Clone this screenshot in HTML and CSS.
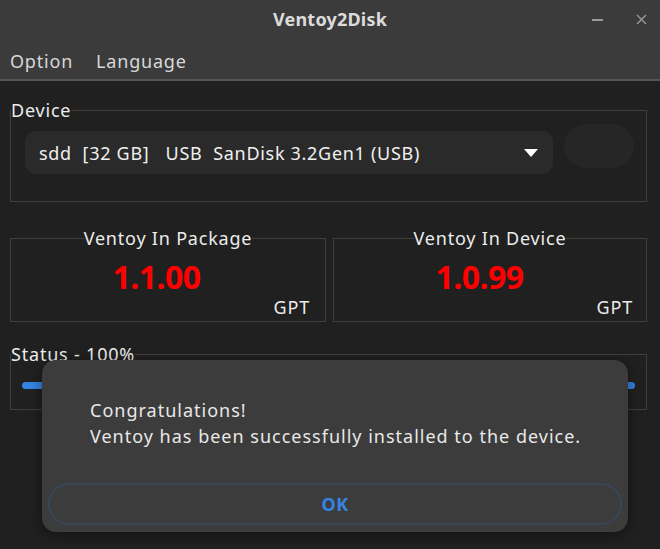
FILE: index.html
```html
<!DOCTYPE html>
<html lang="en">
<head>
    <meta charset="UTF-8">
    <meta name="viewport" content="width=device-width, initial-scale=1.0">
    <title>Ventoy2Disk</title>
    <link rel="stylesheet" href="styles.css">
</head>
<body>
    <!-- Window title bar -->
    <div class="titlebar">
        <span class="title">Ventoy2Disk</span>
        <div class="win-controls">
            <span class="win-min"></span>
            <svg class="win-close" width="11" height="11" viewBox="0 0 11 11">
                <path d="M1 1 L10 10 M10 1 L1 10" stroke="#9a9a9a" stroke-width="1.4" fill="none"/>
            </svg>
        </div>
    </div>

    <!-- Menu bar -->
    <div class="menubar">
        <span class="menu-item">Option</span>
        <span class="menu-item">Language</span>
    </div>

    <div class="main">
        <!-- Device selection -->
        <fieldset class="group device-group">
            <legend>Device</legend>
            <div class="device-row">
                <div class="combo">
                    <span class="combo-text">sdd&nbsp;&nbsp;[32 GB]&nbsp;&nbsp;&nbsp;USB&nbsp;&nbsp;SanDisk 3.2Gen1 (USB)</span>
                    <svg class="combo-arrow" width="14" height="8" viewBox="0 0 14 8">
                        <path d="M0 0 H14 L7 8 Z" fill="#ffffff"/>
                    </svg>
                </div>
                <div class="refresh-btn"></div>
            </div>
        </fieldset>

        <!-- Versions -->
        <div class="version-row">
            <fieldset class="group version-group">
                <legend>Ventoy In Package</legend>
                <div class="version">1.1.00</div>
                <div class="part-style">GPT</div>
            </fieldset>
            <fieldset class="group version-group device-version">
                <legend>Ventoy In Device</legend>
                <div class="version">1.0.99</div>
                <div class="part-style">GPT</div>
            </fieldset>
        </div>

        <!-- Status -->
        <fieldset class="group status-group">
            <legend>Status - 100%</legend>
            <div class="progress">
                <div class="progress-fill" style="width: 100%"></div>
            </div>
        </fieldset>
    </div>

    <!-- Message dialog -->
    <div class="dialog">
        <div class="dialog-text">
            Congratulations!<br>
            Ventoy has been successfully installed to the device.
        </div>
        <button class="dialog-ok">OK</button>
    </div>
</body>
</html>
```

FILE: styles.css
```css
/* Base */
body {
    margin: 0;
    height: 549px;
    overflow: hidden;
    background-color: #202020;
    color: #ececec;
    font-family: "Noto Sans", "Open Sans", sans-serif;
    font-size: 18px;
    letter-spacing: 0.8px;
}

/* Title bar */
.titlebar {
    height: 40px;
    background: #3b3b3b;
    display: flex;
    align-items: center;
    justify-content: center;
    position: relative;
}

.title {
    font-weight: bold;
    color: #dcdcdc;
    letter-spacing: 0.2px;
    margin-top: -2px;
}

.win-controls {
    position: absolute;
    right: 13px;
    top: 14px;
    display: flex;
    align-items: center;
    gap: 33px;
}

.win-min {
    display: block;
    width: 11px;
    height: 2px;
    background: #9a9a9a;
}

.win-close {
    display: block;
}

/* Menu bar */
.menubar {
    height: 39px;
    background: #3b3b3b;
    border-bottom: 2px solid #565656;
    display: flex;
    align-items: center;
    gap: 23px;
    padding-left: 10px;
}

.menu-item {
    color: #d8d8d8;
    margin-top: 2px;
}

/* Main area */
.main {
    padding: 19px 13px 0 10px;
}

.group {
    margin: 0;
    padding: 0;
    border: 1px solid #3e3e3e;
    min-width: 0;
}

.group legend {
    padding: 0;
    line-height: 20px;
    color: #ececec;
}

.device-group {
    height: 102px;
    box-sizing: border-box;
}

.device-row {
    display: flex;
    align-items: flex-start;
    padding: 4px 0 0 14px;
}

.combo {
    width: 528px;
    height: 43px;
    margin-top: 7px;
    box-sizing: border-box;
    background: #2a2a2a;
    border-radius: 11px;
    display: flex;
    align-items: center;
    padding: 0 15px 0 14px;
}

.combo-text {
    flex: 1;
    color: #f0f0f0;
    letter-spacing: 0.7px;
}

.refresh-btn {
    width: 70px;
    height: 44px;
    margin-left: 11px;
    background: #262626;
    border-radius: 22px;
}

/* Versions */
.version-row {
    display: flex;
    gap: 7px;
    margin-top: 26px;
}

.version-group {
    flex: 1;
    height: 94px;
    box-sizing: border-box;
}

.version-group legend {
    margin: 0 auto;
}

.device-version {
    flex: 0 0 314px;
}

.version {
    text-align: center;
    color: #ff0000;
    font-weight: bold;
    font-size: 32px;
    letter-spacing: -0.5px;
    line-height: 40px;
    margin: 9px 23px 0 0;
}

.device-version .version {
    margin-right: 21px;
}

.part-style {
    text-align: right;
    line-height: 20px;
    margin-right: 15px;
}

.device-version .part-style {
    margin-right: 13px;
}

/* Status */
.status-group {
    margin-top: 22px;
    height: 66px;
    box-sizing: border-box;
}

.progress {
    height: 7px;
    margin: 18px 11px 0 11px;
    background: #1a1a1a;
    border-radius: 4px;
}

.progress-fill {
    height: 100%;
    background: #3584e4;
    border-radius: 4px;
}

/* Dialog */
.dialog {
    position: absolute;
    left: 42px;
    top: 360px;
    width: 586px;
    height: 172px;
    box-sizing: border-box;
    background: #3c3c3c;
    border-radius: 14px;
    box-shadow: 0 3px 14px rgba(0, 0, 0, 0.45);
    display: flex;
    flex-direction: column;
    padding: 37px 6px 7px 6px;
}

.dialog-text {
    padding-left: 42px;
    line-height: 26px;
    color: #e8e8e8;
    letter-spacing: 1px;
    flex: 1;
}

.dialog-ok {
    height: 42px;
    border: 2px solid #384656;
    border-radius: 21px;
    background: #3c3c3c;
    color: #3584e4;
    font-family: inherit;
    font-size: 18px;
    font-weight: bold;
    letter-spacing: 0.5px;
}
```
